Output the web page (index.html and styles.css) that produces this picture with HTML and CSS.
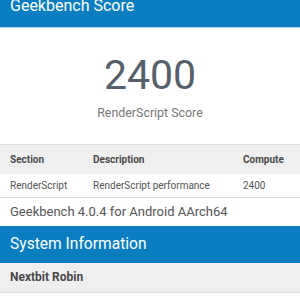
FILE: index.html
```html
<!DOCTYPE html>
<html lang="en">
<head>
  <meta charset="UTF-8" />
  <meta name="viewport" content="width=device-width, initial-scale=1.0" />
  <title>Geekbench Browser</title>
  <link rel="stylesheet" href="styles.css">
</head>
<body>

<header class="barra">
  <h1>Geekbench Score</h1>
</header>

<!-- PONTUACAO -->
<section class="placar">
  <div class="numero">2400</div>
  <div class="rotulo">RenderScript Score</div>
</section>

<table class="tabela">
  <thead>
    <tr>
      <th class="col-secao">Section</th>
      <th class="col-desc">Description</th>
      <th>Compute</th>
    </tr>
  </thead>
  <tbody>
    <tr>
      <td>RenderScript</td>
      <td>RenderScript performance</td>
      <td>2400</td>
    </tr>
  </tbody>
</table>

<div class="versao">Geekbench 4.0.4 for Android AArch64</div>

<!-- SISTEMA -->
<div class="titulo-secao">System Information</div>
<div class="linha-cinza">Nextbit Robin</div>

</body>
</html>
```

FILE: styles.css
```css
*, *::before, *::after { box-sizing: border-box; margin: 0; padding: 0; }

:root {
  --azul:      #0b7ec1;
  --azul-borda:#a9d3ee;
  --cinza:     #efefef;
  --borda:     #dedede;
  --texto:     #4a4a4a;
  --texto2:    #777777;
  --numero:    #56606b;
}

body {
  font-family: Roboto, "Noto Sans", Arial, sans-serif;
  background: #fff;
  color: var(--texto);
  width: 300px;
}

.barra {
  height: 28px;
  background: var(--azul);
  border-bottom: 1px solid var(--azul-borda);
  padding: 0 10px;
}

.barra h1 {
  font-size: 16px;
  font-weight: 400;
  line-height: 12px;
  color: #fff;
  white-space: nowrap;
}

/* ── PONTUACAO ─────────────────────────── */
.placar {
  text-align: center;
  height: 116px;
  padding-top: 27px;
}

.placar .numero {
  font-size: 41px;
  line-height: 41px;
  color: var(--numero);
}

.placar .rotulo {
  font-size: 12.4px;
  color: var(--texto2);
  margin-top: 9px;
}

/* ── TABELA ────────────────────────────── */
.tabela {
  width: 100%;
  table-layout: fixed;
  border-collapse: collapse;
  font-size: 10px;
  text-align: left;
}

.tabela th {
  background: var(--cinza);
  border-top: 1px solid var(--borda);
  height: 29px;
  font-weight: 700;
  color: var(--texto);
  padding: 0 10px;
}

.tabela td {
  height: 24px;
  border-bottom: 1px solid var(--borda);
  padding: 0 10px;
  color: #555;
  white-space: nowrap;
}

.tabela .col-secao { width: 83px; }
.tabela .col-desc { width: 150px; }

.versao {
  height: 28px;
  line-height: 28px;
  padding: 0 10px;
  font-size: 13px;
  color: #555;
}

.titulo-secao {
  height: 37px;
  line-height: 37px;
  background: var(--azul);
  color: #fff;
  font-size: 15.6px;
  padding: 0 10px;
}

.linha-cinza {
  height: 30px;
  line-height: 29px;
  background: var(--cinza);
  border-bottom: 1px solid var(--borda);
  font-size: 12px;
  font-weight: 700;
  padding: 0 10px;
  color: var(--texto);
}
```
